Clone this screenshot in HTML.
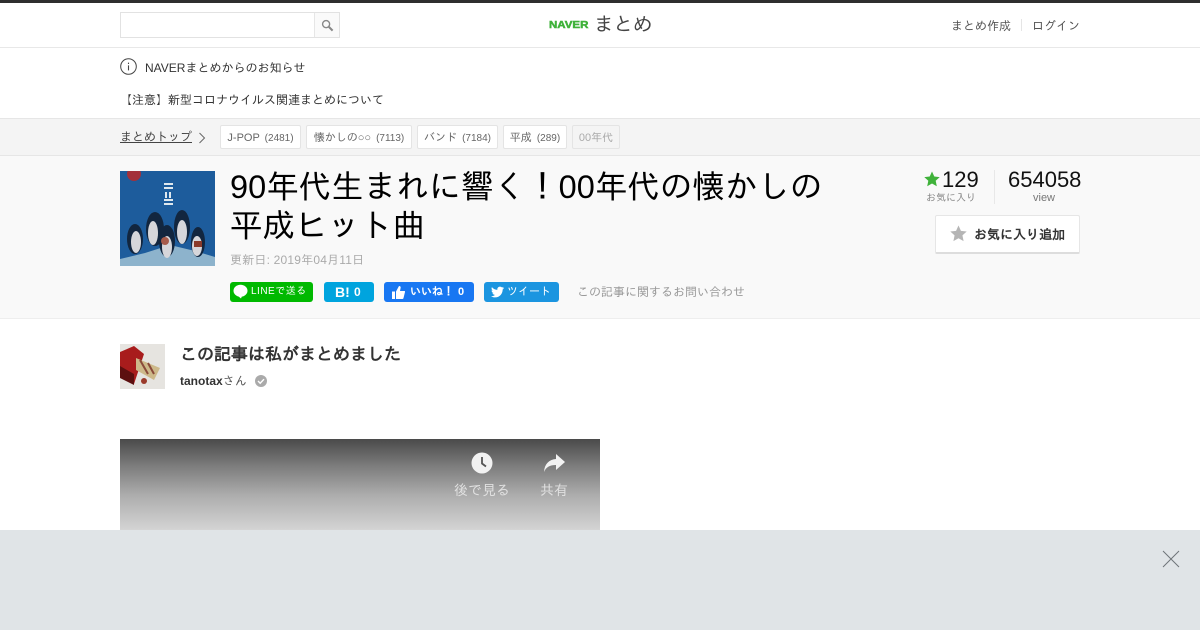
<!DOCTYPE html>
<html lang="ja"><head><meta charset="utf-8"><title>90年代生まれに響く！00年代の懐かしの平成ヒット曲</title>
<style>
html,body{margin:0;padding:0;background:#fff}
body{width:1200px;height:630px;overflow:hidden;position:relative;font-family:"Liberation Sans","IPAGothic","Noto Sans CJK JP",sans-serif;color:#333}
.a{position:absolute;white-space:nowrap}
.tag{position:absolute;top:125px;line-height:24px;box-sizing:border-box;background:#fff;border:1px solid #e4e4e4;border-radius:2px;font-size:11px;color:#666;text-align:center;white-space:nowrap;height:24px}
.tag small{font-size:10px;margin-left:2px}
.btn{position:absolute;top:282px;height:20px;border-radius:3px;color:#fff;font-size:11px;line-height:20px;white-space:nowrap}
</style></head><body>
<div class="a" style="left:0;top:0;width:1200px;height:3px;background:#2f2f2f"></div>
<div class="a" style="left:0;top:47px;width:1200px;height:1px;background:#e8e8e8"></div>
<div class="a" style="left:120px;top:12px;width:220px;height:26px;box-sizing:border-box;border:1px solid #e2e2e2"></div>
<div class="a" style="left:314px;top:13px;width:25px;height:24px;box-sizing:border-box;border-left:1px solid #e6e6e6;background:#fafafa"></div>
<svg class="a" style="left:321px;top:19px" width="13" height="13" viewBox="0 0 14 14"><circle cx="5.500" cy="5.500" r="3.800" fill="none" stroke="#888" stroke-width="1.500"/><path d="M8.500 8.500l4 4" stroke="#888" stroke-width="2.200"/></svg>
<div class="a" style="left:549px;top:20px;font-size:10px;line-height:11px;font-weight:bold;color:#3fb23a;transform:scaleX(1.15);transform-origin:0 0;-webkit-text-stroke:.5px #3fb23a">NAVER</div>
<div class="a" style="left:594px;top:11px;font-size:19.500px;line-height:28px;color:#444">まとめ</div>
<div class="a" style="left:951px;top:18px;font-size:12px;line-height:16px;color:#555">まとめ作成</div>
<div class="a" style="left:1021px;top:19px;width:1px;height:12px;background:#e5e5e5"></div>
<div class="a" style="left:1032px;top:18px;font-size:12px;line-height:16px;color:#555">ログイン</div>

<svg class="a" style="left:120px;top:58px" width="17" height="17" viewBox="0 0 17 17"><circle cx="8.500" cy="8.500" r="7.800" fill="none" stroke="#444" stroke-width="1"/><path d="M8.500 4.600v1.400M8.500 7.400v5" stroke="#444" stroke-width="1.100"/></svg>
<div class="a" style="left:145px;top:60px;font-size:12px;line-height:16px;color:#333">NAVERまとめからのお知らせ</div>
<div class="a" style="left:120px;top:92px;font-size:12px;line-height:16px;color:#333">【注意】新型コロナウイルス関連まとめについて</div>

<div class="a" style="left:0;top:118px;width:1200px;height:38px;box-sizing:border-box;background:#f4f4f4;border-top:1px solid #e6e6e6;border-bottom:1px solid #e6e6e6"></div>
<div class="a" style="left:120px;top:129px;font-size:12px;line-height:16px;color:#444;text-decoration:underline">まとめトップ</div>
<svg class="a" style="left:197px;top:132px" width="10" height="12" viewBox="0 0 10 12"><path d="M2.500 1l5 5-5 5" fill="none" stroke="#666" stroke-width="1"/></svg>
<div class="tag" style="left:220px;width:81px">J-POP <small>(2481)</small></div>
<div class="tag" style="left:306px;width:106px">懐かしの○○ <small>(7113)</small></div>
<div class="tag" style="left:417px;width:81px">バンド <small>(7184)</small></div>
<div class="tag" style="left:503px;width:64px">平成 <small>(289)</small></div>
<div class="tag" style="left:572px;width:48px;background:#f4f4f4;color:#aaa">00年代</div>

<div class="a" style="left:0;top:156px;width:1200px;height:163px;box-sizing:border-box;background:#f9f9f9;border-bottom:1px solid #eee"></div>

<svg class="a" style="left:120px;top:171px" width="95" height="95" viewBox="0 0 95 95">
<rect width="95" height="95" fill="#1d5c9c"/>
<circle cx="14" cy="3" r="7" fill="#a3303a"/>
<path d="M0 95V88L25 82 50 74 75 80 95 86V95z" fill="#8db3cc"/>
<g fill="#12263f"><ellipse cx="15" cy="68" rx="8" ry="15"/><ellipse cx="35" cy="58" rx="9" ry="17"/><ellipse cx="47" cy="70" rx="8" ry="16"/><ellipse cx="62" cy="56" rx="8" ry="17"/><ellipse cx="78" cy="71" rx="7" ry="15"/></g>
<g fill="#d6d6da"><ellipse cx="16" cy="71" rx="5" ry="11"/><ellipse cx="33" cy="62" rx="5" ry="12"/><ellipse cx="47" cy="76" rx="5" ry="11"/><ellipse cx="62" cy="61" rx="5" ry="12"/><ellipse cx="77" cy="75" rx="5" ry="10"/></g>
<path d="M44 13h9M44 17h9M46 21v6M50 21v6M44 29h9M44 33h9" stroke="#dfe8ee" stroke-width="2" fill="none"/>
<circle cx="45" cy="70" r="4" fill="#a65a4a"/><rect x="74" y="70" width="8" height="6" fill="#8a3a2a"/>
</svg>

<div class="a" style="left:230px;top:168px;width:620px;white-space:normal;font-size:32.500px;line-height:39px;color:#000">90年代生まれに響く！00年代の懐かしの<br>平成ヒット曲</div>
<div class="a" style="left:230px;top:252px;font-size:12px;line-height:16px;color:#aaa;letter-spacing:.2px">更新日: 2019年04月11日</div>

<div class="btn" style="left:230px;width:83px;background:#00b900"></div>
<svg class="a" style="left:233px;top:284px" width="15" height="15" viewBox="0 0 15 15"><ellipse cx="7.500" cy="6.800" rx="7" ry="6" fill="#fff"/><path d="M5 12l3 2.500 1-2.500z" fill="#fff"/></svg>
<div class="a" style="left:251px;top:282px;font-size:10px;line-height:20px;color:#fff;letter-spacing:.5px">LINEで送る</div>
<div class="btn" style="left:324px;width:50px;background:#00a4de;font-weight:bold;font-size:12px"><span style="position:absolute;left:11px;font-size:14px">B!</span><span style="position:absolute;left:30px">0</span></div>
<div class="btn" style="left:384px;width:90px;background:#1877f2;font-weight:bold"><svg style="position:absolute;left:8px;top:4px" width="13" height="13" viewBox="0 0 13 13"><path d="M0 5.500h3V13H0zM4 5.500L7 0c1.500 0 2 1 1.500 2.500L8 5h4.500c.5 0 .7.500.5 1L11.500 12c-.1.600-.5 1-1 1H4z" fill="#fff"/></svg><span style="position:absolute;left:26px">いいね！</span><span style="position:absolute;left:74px">0</span></div>
<div class="btn" style="left:484px;width:75px;background:#1b95e0"><svg style="position:absolute;left:7px;top:4px" width="13" height="12" viewBox="0 0 24 20"><path d="M24 2.400c-.9.400-1.800.7-2.800.8 1-.6 1.800-1.600 2.200-2.700-1 .6-2 1-3.100 1.200C19.300.7 18 0 16.600 0c-3.200 0-5.500 3-4.800 6C7.700 5.800 4.100 3.900 1.700.9.400 3.100 1 6 3.200 7.500c-.8 0-1.600-.2-2.200-.6-.1 2.300 1.600 4.500 3.900 4.900-.7.200-1.500.2-2.200.1.600 2 2.400 3.400 4.600 3.400C5.200 17.400 2.600 18.100 0 17.800 2.200 19.200 4.800 20 7.500 20c9.100 0 14.300-7.700 14-14.600 1-.7 1.800-1.600 2.500-3z" fill="#fff"/></svg><span style="position:absolute;left:23px">ツイート</span></div>
<div class="a" style="left:577px;top:284px;font-size:12px;line-height:16px;color:#999">この記事に関するお問い合わせ</div>

<svg class="a" style="left:924px;top:171px" width="16" height="16" viewBox="0 0 16 16"><path d="M8 .5l2.300 5 5.400.6-4 3.700 1.100 5.400L8 12.500l-4.800 2.700 1.100-5.400-4-3.700 5.400-.6z" fill="#3fb23a"/></svg>
<div class="a" style="left:942px;top:167px;font-size:22px;line-height:26px;color:#111">129</div>
<div class="a" style="left:926px;top:192px;font-size:10px;line-height:14px;color:#888">お気に入り</div>
<div class="a" style="left:994px;top:170px;width:1px;height:34px;background:#e8e8e8"></div>
<div class="a" style="left:1008px;top:167px;font-size:22px;line-height:26px;color:#111">654058</div>
<div class="a" style="left:1033px;top:191px;font-size:11px;line-height:14px;color:#777">view</div>
<div class="a" style="left:935px;top:215px;width:145px;height:39px;box-sizing:border-box;background:#fff;border:1px solid #e6e6e6;border-bottom:2px solid #ddd;border-radius:2px"></div>
<svg class="a" style="left:950px;top:225px" width="17" height="17" viewBox="0 0 16 16"><path d="M8 .5l2.300 5 5.400.6-4 3.700 1.100 5.400L8 12.500l-4.800 2.700 1.100-5.400-4-3.700 5.400-.6z" fill="#b5b5b5"/></svg>
<div class="a" style="left:974px;top:226px;font-size:13px;line-height:18px;font-weight:bold;color:#333">お気に入り追加</div>

<svg class="a" style="left:120px;top:344px" width="45" height="45" viewBox="0 0 45 45"><rect width="45" height="45" fill="#e6e4e0"/><path d="M0 8L14 2 24 10 14 40 0 33z" fill="#a81c1c"/><path d="M0 22L14 30 14 41 0 34z" fill="#5c0f0f"/><path d="M16 14l24 10-6 12-18-10z" fill="#cdb98a"/><path d="M20 16l8 14M28 19l6 11" stroke="#8a4a3a" stroke-width="2"/><circle cx="24" cy="37" r="3" fill="#9a3a2a"/></svg>
<div class="a" style="left:180px;top:344px;font-size:17px;line-height:22px;font-weight:bold;color:#333">この記事は私がまとめました</div>
<div class="a" style="left:180px;top:373px;font-size:12px;line-height:17px;color:#555"><b style="color:#333">tanotax</b>さん</div>
<svg class="a" style="left:255px;top:375px" width="12" height="12" viewBox="0 0 12 12"><circle cx="6" cy="6" r="6" fill="#aaa"/><path d="M3 6l2.200 2.200L9 4.200" fill="none" stroke="#fff" stroke-width="1.400"/></svg>

<div class="a" style="left:120px;top:439px;width:480px;height:91px;background:linear-gradient(#4a4a4a,#7d7d7d 30%,#adadad 62%,#d4d4d4)"></div>
<svg class="a" style="left:471px;top:452px" width="22" height="22" viewBox="0 0 22 22"><circle cx="11" cy="11" r="10.500" fill="#f2f2f2"/><path d="M11 5v6.500l4 3" fill="none" stroke="#555" stroke-width="1.800"/></svg>
<svg class="a" style="left:543px;top:453px" width="22" height="20" viewBox="0 0 22 20"><path d="M13 1l9 8-9 8v-5C7 12 3 14 1 19 1.500 11 6 6.500 13 6z" fill="#f2f2f2"/></svg>
<div class="a" style="left:454px;top:481px;font-size:14px;line-height:18px;color:#e0e0e0">後で見る</div>
<div class="a" style="left:540px;top:481px;font-size:14px;line-height:18px;color:#e0e0e0">共有</div>

<div class="a" style="left:0;top:530px;width:1200px;height:100px;background:#e0e4e7"></div>
<svg class="a" style="left:1162px;top:550px" width="18" height="18" viewBox="0 0 18 18"><path d="M1 1l16 16M17 1L1 17" stroke="#6f7478" stroke-width="1" fill="none"/></svg>
</body></html>
